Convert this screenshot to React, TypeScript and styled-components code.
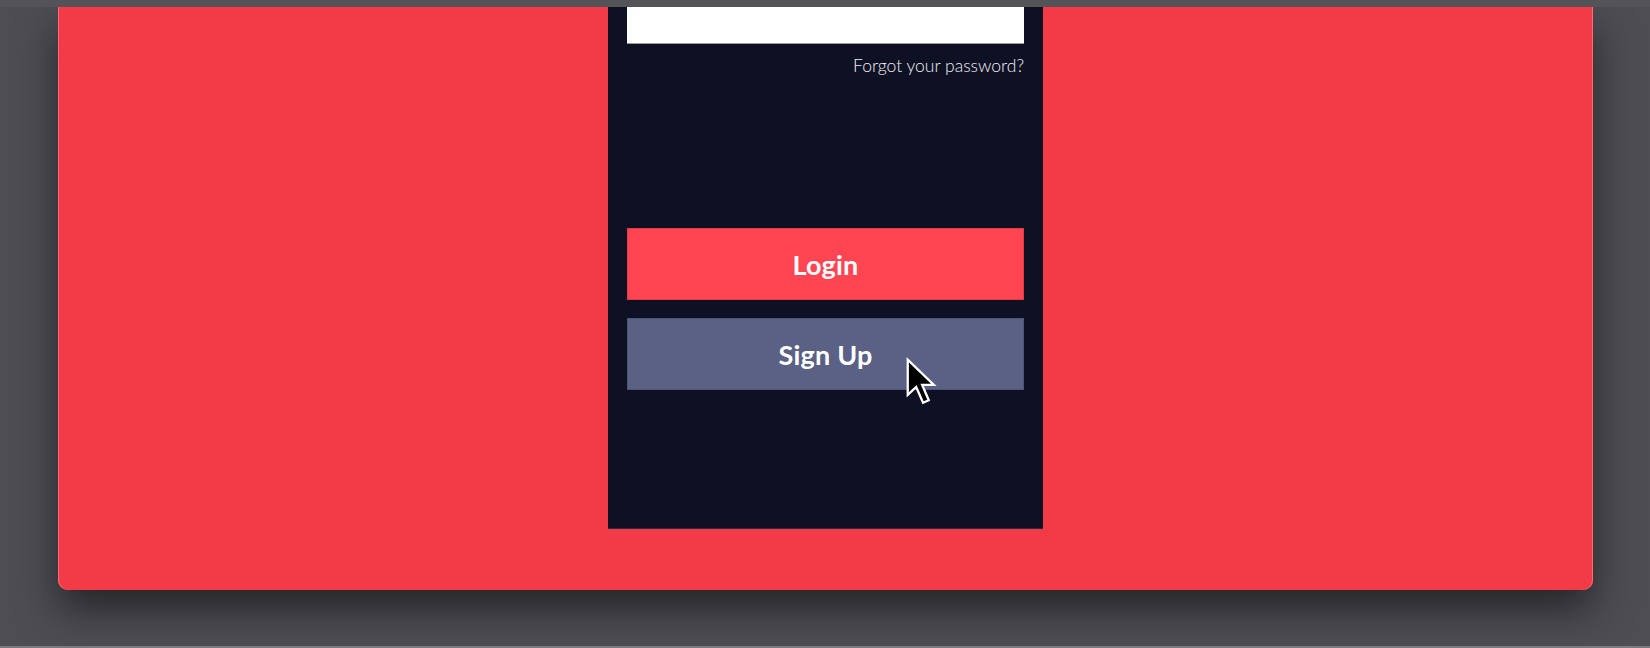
import React from "react";
import styled, { createGlobalStyle } from "styled-components";

const Global = createGlobalStyle`
  html, body { margin: 0; padding: 0; }
  body {
    width: 1650px;
    height: 648px;
    overflow: hidden;
    background: #4d4d53;
    font-family: Lato, "Open Sans", sans-serif;
  }
`;

const Stage = styled.div`
  position: relative;
  width: 1650px;
  height: 648px;
  display: flex;
  flex-direction: column;
  background: #4d4d53;
`;

const TopStrip = styled.div`
  height: 7px;
  flex: none;
  background: #535358;
  position: relative;
  z-index: 2;
`;

const Window = styled.div`
  flex: none;
  margin-left: 58px;
  width: 1535px;
  height: 583px;
  background: #f33b47;
  border-radius: 0 0 10px 10px;
  box-shadow: inset 1px 0 0 #ff6a73, inset -1px 0 0 #ff6a73, 0 20px 40px rgba(0, 0, 0, 0.5);
  display: flex;
  justify-content: center;
  align-items: flex-start;
`;

const Panel = styled.div`
  width: 435px;
  height: 522px;
  box-sizing: border-box;
  background: #0e1024;
  border-bottom: 1px solid #262a45;
  padding: 0 19px;
  display: flex;
  flex-direction: column;
`;

const Input = styled.div`
  height: 37px;
  box-sizing: border-box;
  background: #ffffff;
  border-bottom: 1px solid #9a9aa2;
`;

const Forgot = styled.a`
  margin-top: 12px;
  align-self: flex-end;
  font-family: Lato, sans-serif;
  font-weight: 300;
  font-size: 17.5px;
  line-height: 20px;
  color: #f0f0f4;
  text-decoration: none;
`;

const Button = styled.button<{ $bg: string; $top: number }>`
  margin-top: ${(p) => p.$top}px;
  height: 72px;
  width: 100%;
  border: 1px solid rgba(0, 0, 0, 0.12);
  background: ${(p) => p.$bg};
  color: #ffffff;
  font-family: Lato, sans-serif;
  font-weight: 700;
  font-size: 27px;
  letter-spacing: 0.2px;
  cursor: pointer;
  padding: 0;
`;

const BottomEdge = styled.div`
  margin-top: auto;
  height: 2px;
  background: #7a7a80;
`;

const Cursor = styled.svg`
  position: absolute;
  left: 905px;
  top: 357px;
  z-index: 3;
`;

export default function App() {
  return (
    <>
      <Global />
      <Stage>
        <TopStrip />
        <Window>
          <Panel>
            <Input />
            <Forgot href="#">Forgot your password?</Forgot>
            <Button $bg="#ff4551" $top={152}>Login</Button>
            <Button $bg="#5b6085" $top={18}>Sign Up</Button>
          </Panel>
        </Window>
        <BottomEdge />
        <Cursor width="32" height="48" viewBox="0 0 14 21">
          <path
            d="M1.2 1.2 L1.2 16.6 L4.9 13.1 L7.9 20 L10.4 18.9 L7.5 12.2 L12.6 12.2 Z"
            fill="#000"
            stroke="#fff"
            strokeWidth="1"
            strokeLinejoin="miter"
          />
        </Cursor>
      </Stage>
    </>
  );
}
